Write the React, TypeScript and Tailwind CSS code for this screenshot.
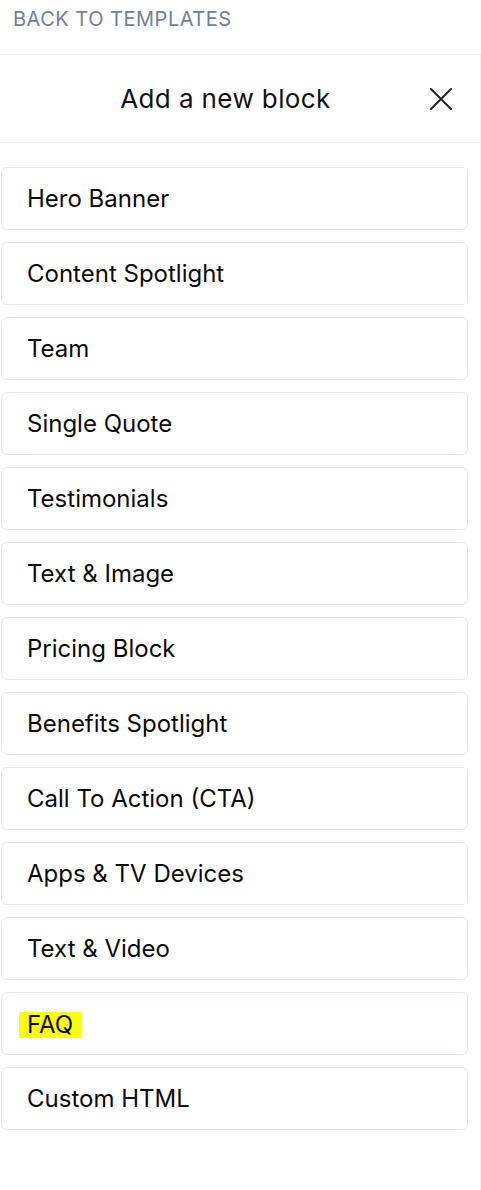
const blocks = [
  'Hero Banner',
  'Content Spotlight',
  'Team',
  'Single Quote',
  'Testimonials',
  'Text & Image',
  'Pricing Block',
  'Benefits Spotlight',
  'Call To Action (CTA)',
  'Apps & TV Devices',
  'Text & Video',
  'FAQ',
  'Custom HTML',
]

export default function App() {
  return (
    <div className="w-[481px] h-[1190px] bg-white flex flex-col font-['Inter',sans-serif] overflow-hidden">
      {/* back link */}
      <div className="h-[54px] px-[13px] pt-[6px]">
        <a className="text-[20px] leading-[26px] tracking-[0.5px] text-[#718096] uppercase cursor-pointer">Back to templates</a>
      </div>

      {/* panel */}
      <div className="flex-1 border-t border-r border-[#f1f2f4] flex flex-col">
        <div className="h-[88px] border-b border-[#eceef1] flex items-center justify-center relative">
          <h2 className="text-[26px] leading-8 tracking-[0.4px] text-[#111] pr-[29px]">Add a new block</h2>
          <button className="absolute right-[28px] top-[33px] text-[#1f2430]">
            <svg width="22" height="22" viewBox="0 0 22 22" fill="none" stroke="currentColor" strokeWidth="2" strokeLinecap="round">
              <path d="M1 1L21 21M21 1L1 21" />
            </svg>
          </button>
        </div>

        <div className="pt-6 pl-px pr-3 flex flex-col gap-3">
          {blocks.map((b) => (
            <div
              key={b}
              className="h-[63px] border border-[#e2e8f0] rounded-md flex items-center pl-[25px] text-[24px] text-[#0a0a0a] cursor-pointer"
            >
              {b === 'FAQ' ? (
                <span className="bg-[#ffff00] -ml-2 pl-2 pr-2 leading-[26px] mt-[3px]">{b}</span>
              ) : (
                <span>{b}</span>
              )}
            </div>
          ))}
        </div>
      </div>
    </div>
  )
}
